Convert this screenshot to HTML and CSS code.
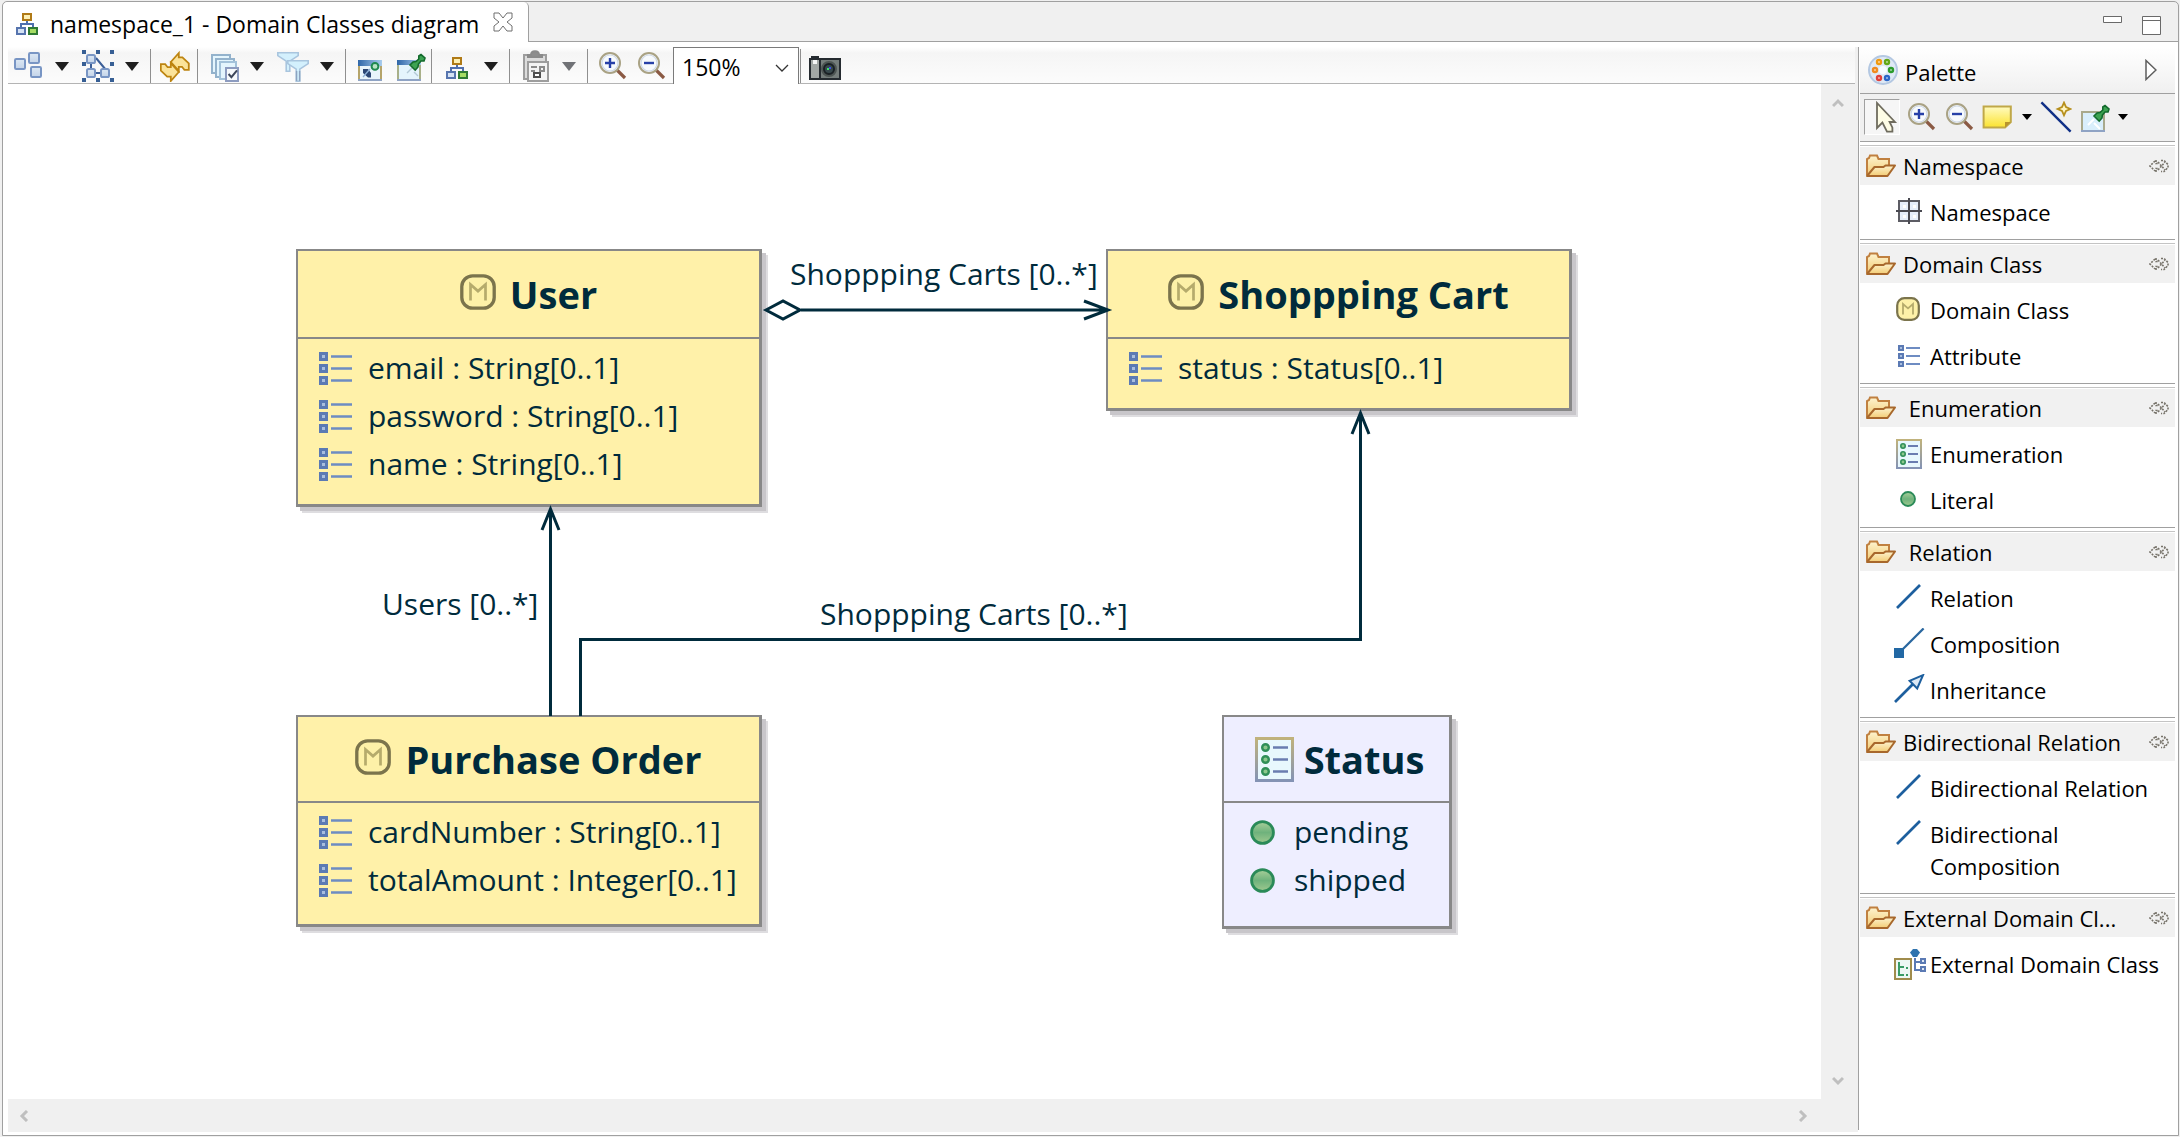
FILE: index.html
```html
<!DOCTYPE html>
<html lang="en">
<head>
<meta charset="utf-8">
<title>namespace_1 - Domain Classes diagram</title>
<link rel="stylesheet" href="styles.css">
</head>
<body>
<svg class="defs" aria-hidden="true">
  <defs>
    <linearGradient id="gBlue" x1="0" y1="0" x2="0" y2="1"><stop offset="0" stop-color="#dce8f4"/><stop offset="1" stop-color="#c3d3e8"/></linearGradient>
    <linearGradient id="gFolder" x1="0" y1="0" x2="0" y2="1"><stop offset="0" stop-color="#fdf3cf"/><stop offset="1" stop-color="#f3cc74"/></linearGradient>
    <linearGradient id="gNote" x1="0" y1="0" x2="0" y2="1"><stop offset="0" stop-color="#fffbc0"/><stop offset="1" stop-color="#fbe22e"/></linearGradient>
    <linearGradient id="gTitle" x1="0" y1="0" x2="1" y2="0"><stop offset="0" stop-color="#2f66a8"/><stop offset="1" stop-color="#a9cdee"/></linearGradient>
    <linearGradient id="gPage" x1="0" y1="0" x2="0" y2="1"><stop offset="0" stop-color="#c0b27c"/><stop offset="1" stop-color="#8493b4"/></linearGradient>
    <linearGradient id="gDot" x1="0" y1="0" x2="0" y2="1"><stop offset="0" stop-color="#a9cf9a"/><stop offset=".5" stop-color="#6fb27c"/><stop offset="1" stop-color="#9fc98f"/></linearGradient>
  </defs>
  <symbol id="tree" viewBox="0 0 11 11">
    <path d="M5.500 4v2M2.500 8V5.500h6V8" fill="none" stroke="#4f6fae"/>
    <rect x="3.500" y=".5" width="4" height="3" fill="#fdf0b4" stroke="#b07a16"/>
    <rect x=".5" y="7.500" width="4" height="3" fill="#d5e2f4" stroke="#5674ae"/>
    <rect x="6.500" y="7.500" width="4" height="3" fill="#a6dc64" stroke="#2f7a34"/>
  </symbol>
  <symbol id="arrange" viewBox="0 0 16 16">
    <g fill="url(#gBlue)" stroke="#7895c4"><rect x="1.500" y="4.500" width="5" height="5" rx=".6"/><rect x="8.500" y="1.500" width="5" height="5" rx=".6"/><rect x="9.500" y="8.500" width="5" height="5" rx=".6"/></g>
  </symbol>
  <symbol id="selectall" viewBox="0 0 16 16">
    <path d="M7 4l5 6M4.500 7v3M7 11.500h3" fill="none" stroke="#3c5f98"/>
    <g fill="url(#gBlue)" stroke="#7895c4"><rect x="2.500" y="2.500" width="4" height="4" rx=".8"/><rect x="2.500" y="9.500" width="4" height="4" rx=".8"/><rect x="9.500" y="9.500" width="4" height="4" rx=".8"/></g>
    <path d="M0 0h2v2H0zM7 0h2v2H7zM14 0h2v2h-2zM0 6h2v2H0zM14 6h2v2h-2zM0 14h2v2H0zM7 14h2v2H7zM14 14h2v2h-2z" fill="#375f94"/>
  </symbol>
  <symbol id="refresh" viewBox="0 0 16 16">
    <g fill="#fbe39a" stroke="#bd8410" stroke-width=".9"><path d="M5.400 6l4-4.500v2.200h1.800l3.200 3v3.200h-2.200l-1.200-1.500H9.400v2z"/><path d="M9.400 11l-4 4.500v-2.200H3.600l-3.200-3V7.100h2.200l1.200 1.500h1.600v-2z"/></g>
  </symbol>
  <symbol id="layers" viewBox="0 0 16 16">
    <g fill="#e4f5fd" stroke="#93b2cc"><rect x="2.500" y="2.500" width="9" height="9"/><rect x="4.500" y="4.500" width="9" height="9"/><rect x="6.500" y="6" width="8" height="8.500" stroke="#a3c2da"/></g>
    <rect x="9.500" y="9" width="6" height="6.500" fill="#f6f9fc" stroke="#8d9cc0"/><path d="M10.800 12l1.400 1.600 2.800-3.400" fill="none" stroke="#3c465a"/>
  </symbol>
  <symbol id="filter" viewBox="0 0 16 16">
    <g fill="#d3f0fd" stroke="#a9c5de" stroke-width=".8"><path d="M.4 1.400h10.200v1.400L6.400 5.600v5H4.600v-5L.4 2.800z"/><path d="M5.400 5.400h10.200v1.400l-4.200 2.800v6H9.600v-6L5.400 6.800z"/></g>
    <path d="M9.800 10.500v5M11.300 10.500v5" stroke="#8ea3c0" stroke-width=".7"/>
  </symbol>
  <symbol id="showview" viewBox="0 0 16 16">
    <rect x="2" y="6" width="11" height="9" fill="#e9f4fb" stroke="#b5a46a"/><path d="M1.500 15h12" stroke="#8fa3c4"/>
    <rect x="1.500" y="5" width="12" height="3" fill="url(#gTitle)"/>
    <path d="M4 9.500h2.500l1.500 2v2.300H6.500L4 11.500z" fill="#2c4674"/><path d="M4 13.500l3.500-4" stroke="#8fb2d8" stroke-width=".7"/><circle cx="10" cy="8.200" r="1.700" fill="#b9e3c4" stroke="#1f8a50"/>
  </symbol>
  <symbol id="pinview" viewBox="0 0 16 16">
    <rect x="2" y="6" width="11" height="9" fill="#e4f4fc" stroke="#a9b089"/><path d="M1.500 15h12" stroke="#8fa3c4"/>
    <rect x="1.500" y="5" width="12" height="2.500" fill="url(#gTitle)"/>
    <path d="M6.500 11.500L9 9M10 11l2 2" stroke="#b3c9d6" stroke-width=".7"/><path d="M8 7.500l2.600 2.600 1.400-1.600.2-1.500 1.300-1.500h1.500L15.500 4 13.500 2.300 12.400 3v1.500L11 5.800 9.500 6z" fill="#3da352" stroke="#136a2c" stroke-width=".8"/>
  </symbol>
  <symbol id="pinnote" viewBox="0 0 16 16">
    <rect x="2" y="5.500" width="11" height="9.500" fill="#d9eefb" stroke="#a9a98c"/><path d="M1.500 15h12" stroke="#8fa3c4"/>
    <path d="M8 11l3 3M5 12l3-3" stroke="#fff"/><path d="M8 7.500l2.600 2.600 1.400-1.600.2-1.500 1.300-1.500h1.500L15.500 4 13.500 2.300 12.400 3v1.500L11 5.800 9.500 6z" fill="#3da352" stroke="#136a2c" stroke-width=".8"/>
  </symbol>
  <symbol id="clipboard" viewBox="0 0 16 16">
    <rect x="2.500" y="2.500" width="11" height="12" fill="#dcdcdc" stroke="#9d9d9d"/><path d="M4.500 3.500v-1H6c0-2.500 4-2.500 4 0h1.500v1z" fill="#8d8d8d" stroke="#8a8a8a"/>
    <path d="M4.500 6h10v9.500h-10z" fill="#f4f4f4" stroke="#9d9d9d"/><path d="M6 8.500h3M6 10.500h2M10.500 8.500h2v2h-2z" fill="none" stroke="#8a8a8a"/><rect x="7.500" y="11.500" width="3" height="2" fill="#fff" stroke="#4e4e4e"/>
  </symbol>
  <symbol id="lens" viewBox="0 0 16 16">
    <path d="M10 10l4 4" stroke="#8b5a44" stroke-width="1.600"/><circle cx="6.500" cy="6.500" r="5" fill="#f7fafd" stroke="#a9a284"/><circle cx="6.500" cy="6.500" r="4" fill="none" stroke="#cfd9e6" stroke-width=".6"/>
  </symbol>
  <symbol id="zoomin" viewBox="0 0 16 16"><use href="#lens"/><path d="M4 6.500h5M6.500 4v5" stroke="#2740a8" stroke-width="1.200"/></symbol>
  <symbol id="zoomout" viewBox="0 0 16 16"><use href="#lens"/><path d="M4 6.500h5" stroke="#2740a8" stroke-width="1.200"/></symbol>
  <symbol id="camera" viewBox="0 0 16 16">
    <path d="M1 3h4v1h11v11H0V4h1z" fill="#252b30"/><rect x="1" y="5" width="4" height="9" fill="#a2a8a6"/><rect x="2" y="5" width="2" height="2" fill="#f4f6f6"/><rect x="6" y="5" width="9" height="9" fill="#757d7b"/>
    <circle cx="10" cy="9.500" r="3.500" fill="#1a2024" stroke="#4d5553"/><circle cx="10" cy="9.500" r="2" fill="#37484c"/><path d="M9 9h1v1H9z" fill="#3ee06a"/><path d="M10 8.500h1v1h-1z" fill="#3b50e6"/>
  </symbol>
  <symbol id="palette" viewBox="0 0 16 16">
    <circle cx="8" cy="8" r="7" fill="#dfe9f5" stroke="#b4c8e2"/><circle cx="8" cy="8" r="2" fill="#f5fbff"/>
    <g fill="#fff" stroke-width="1.200"><circle cx="6" cy="4" r="1" stroke="#f09a10"/><circle cx="10" cy="4" r="1" stroke="#62a818"/><circle cx="4" cy="8" r="1" stroke="#f08a20"/><circle cx="12" cy="8" r="1" stroke="#2c9c2c"/><circle cx="6" cy="12" r="1" stroke="#e0403a"/><circle cx="10" cy="12" r="1" stroke="#2a66c8"/></g>
  </symbol>
  <symbol id="cursor" viewBox="0 0 16 16"><path d="M5.500 1v12.500l2.700-2.700 2.300 4.500h2.700v-2L11.800 10.500h2.700z" fill="#fefde6" stroke="#6f6c5e" stroke-width=".9"/></symbol>
  <symbol id="note" viewBox="0 0 16 16"><path d="M.8 2.800h13.600v7.700l-2.900 2.800H.8z" fill="url(#gNote)" stroke="#c0a848"/><path d="M11.500 13.300v-2.800h2.900z" fill="#b8942c"/></symbol>
  <symbol id="newline" viewBox="0 0 16 16"><path d="M.7.7l14.600 14.600" stroke="#0f2f86" stroke-width="1.200"/><path d="M12 .8l1 2.200 2.200 1-2.200 1-1 2.200-1-2.200-2.200-1 2.200-1z" fill="#fff6c2" stroke="#b68f1c" stroke-width=".9"/></symbol>
  <symbol id="folder" viewBox="0 0 32 24">
    <path d="M2 21V5l2-1 1-2.500h7L13.500 5H24v6" fill="url(#gFolder)" stroke="#c08040" stroke-width="2"/><path d="M2 22l7.500-9h9l2-1.500H30L22.500 22z" fill="url(#gFolder)" stroke="#a8682c" stroke-width="2" stroke-linejoin="round"/>
  </symbol>
  <symbol id="pushpin" viewBox="0 0 20 14"><path d="M6 2L1 7l5 5M7 1v3.500h3M7 13V9.500h3M9 3l7 8M9 11l7-8M12 1.500h3L19 5.500v3l-4 4h-3" fill="none" stroke="#77736a" stroke-width="1.600" stroke-dasharray="2 1.200"/></symbol>
  <symbol id="grid" viewBox="0 0 16 16"><rect x="2.500" y="2.500" width="10" height="10" fill="#e6eefb" stroke="#5c5c64" stroke-width="1"/><path d="M7.500 1v13M1 7.500h13" stroke="#4a4a52"/><path d="M4.500 4.500h1.500v1.500H4.500zM9.500 4.500H11v1.500H9.500zM4.500 9.500h1.500V11H4.500zM9.500 9.500H11V11H9.500z" fill="#fff"/></symbol>
  <symbol id="mclass" viewBox="0 0 12 12"><rect x=".6" y=".6" width="10.800" height="10.800" rx="3.600" fill="#fdf1a8" stroke="#7b744c" stroke-width="1.100"/><path d="M3.500 8.800V3.500L6 5.700l2.500-2.200v5.300" fill="none" stroke="#b5ab6c" stroke-width=".9"/></symbol>
  <symbol id="attr" viewBox="0 0 11 11"><path d="M0 0h3v3H0zM0 4h3v3H0zM0 8h3v3H0z" fill="#5b7ab4"/><path d="M1 1h1v1H1zM1 5h1v1H1zM1 9h1v1H1z" fill="#a9bede"/><path d="M4 1.500h7M4 5.500h7M4 9.500h7" stroke="#6e8cc2" stroke-width=".9"/></symbol>
  <symbol id="enum" viewBox="0 0 13 15"><rect x=".5" y=".5" width="12" height="14" fill="#e8f8fd" stroke="url(#gPage)"/><g fill="#8cc88c" stroke="#2f8f58" stroke-width=".8"><circle cx="3.500" cy="3.500" r="1.100"/><circle cx="3.500" cy="7.500" r="1.100"/><circle cx="3.500" cy="11.500" r="1.100"/></g><path d="M6 3.500h5M6 7.500h5M6 11.500h5" stroke="#6a7db0" stroke-width=".9"/></symbol>
  <symbol id="literal" viewBox="0 0 8 8"><circle cx="4" cy="4" r="3.500" fill="url(#gDot)" stroke="#2a8a58" stroke-width=".9"/></symbol>
  <symbol id="rel" viewBox="0 0 16 16"><path d="M1.500 13L13 1.500" stroke="#1d5f9e" stroke-width="1.300"/></symbol>
  <symbol id="comp" viewBox="0 0 16 16"><path d="M4 11L14.800.2" stroke="#2a679f" stroke-width="1.100"/><path d="M0 10h5v5H0z" fill="#2268a4"/></symbol>
  <symbol id="inherit" viewBox="0 0 16 16"><path d="M.5 14L10 4.500" stroke="#1d5f9e" stroke-width="1.300"/><path d="M14.500.6L7.800 3.400l3.800 3.800z" fill="#dce9f5" stroke="#1d5f9e"/></symbol>
  <symbol id="extern" viewBox="0 0 16 16"><rect x=".5" y="5.500" width="8" height="10" fill="#eef8f4" stroke="#a08c4c"/><path d="M2.500 7v7M2.500 9.500H5M2.500 13.500H5M6 10h1M6 13.500h1" stroke="#3a9c66"/><path d="M10.500 5v6H13M10.500 7H13" fill="none" stroke="#5b7ab4"/><path d="M8 2.200L9.500.5h2L13 2.200 11.500 4.500h-2z" fill="#2f73ae"/><path d="M13.500 5.500h2v2h-2zM13.500 9.500h2v2h-2z" fill="#dde7f5" stroke="#5b7ab4"/></symbol>
</svg>

<div class="window">
  <header class="tabbar">
    <div class="tab">
      <svg class="tab-icon"><use href="#tree"/></svg>
      <span>namespace_1 - Domain Classes diagram</span>
      <button class="tab-close" aria-label="Close"><svg viewBox="0 0 20 20"><path d="M1 1h5l4 5 4-5h5v5l-5 4 5 4v5h-5l-4-5-4 5H1v-5l5-4-5-4z" fill="#fff" stroke="#6e6e6e"/></svg></button>
    </div>
    <div class="win-buttons">
      <button aria-label="Minimize"><svg viewBox="0 0 20 20"><path d="M.5.5h18v6H.5z" fill="#fff" stroke="#6a6a6a"/></svg></button>
      <button aria-label="Maximize"><svg viewBox="0 0 20 20"><path d="M.5.5h18v18H.5zM.5 4.500h18" fill="#fff" stroke="#6a6a6a"/></svg></button>
    </div>
  </header>

  <div class="body">
    <main class="editor">
      <div class="toolbar">
        <div class="group">
          <button class="tool" aria-label="Arrange"><svg><use href="#arrange"/></svg></button><button class="drop" aria-label="Arrange menu"><i></i></button>
          <button class="tool second" aria-label="Select"><svg><use href="#selectall"/></svg></button><button class="drop" aria-label="Select menu"><i></i></button>
        </div>
        <div class="group plain"><button class="tool" aria-label="Refresh"><svg><use href="#refresh"/></svg></button></div>
        <div class="group">
          <button class="tool" aria-label="Layers"><svg><use href="#layers"/></svg></button><button class="drop" aria-label="Layers menu"><i></i></button>
          <button class="tool second" aria-label="Filters"><svg><use href="#filter"/></svg></button><button class="drop" aria-label="Filters menu"><i></i></button>
        </div>
        <div class="group plain"><button class="tool" aria-label="Show"><svg><use href="#showview"/></svg></button><button class="tool" aria-label="Pin"><svg><use href="#pinview"/></svg></button></div>
        <div class="group"><button class="tool" aria-label="Layout"><svg class="small"><use href="#tree"/></svg></button><button class="drop" aria-label="Layout menu"><i></i></button></div>
        <div class="group"><button class="tool" aria-label="Paste"><svg><use href="#clipboard"/></svg></button><button class="drop off" aria-label="Paste menu"><i></i></button></div>
        <div class="group plain zooms"><button class="tool" aria-label="Zoom in"><svg><use href="#zoomin"/></svg></button><button class="tool" aria-label="Zoom out"><svg><use href="#zoomout"/></svg></button></div>
        <div class="zoom">
          <select aria-label="Zoom level"><option>150%</option></select>
          <svg viewBox="0 0 14 8"><path d="M1 1l6 6 6-6" fill="none" stroke="#333" stroke-width="1.300"/></svg>
        </div>
        <div class="group last"><button class="tool" aria-label="Export as image"><svg><use href="#camera"/></svg></button></div>
      </div>

      <div class="workspace">
        <section class="canvas">
          <article class="node user">
            <h2><svg><use href="#mclass"/></svg>User</h2>
            <ul>
              <li><svg><use href="#attr"/></svg>email : String[0..1]</li>
              <li><svg><use href="#attr"/></svg>password : String[0..1]</li>
              <li><svg><use href="#attr"/></svg>name : String[0..1]</li>
            </ul>
          </article>
          <article class="node cart">
            <h2><svg><use href="#mclass"/></svg>Shoppping Cart</h2>
            <ul><li><svg><use href="#attr"/></svg>status : Status[0..1]</li></ul>
          </article>
          <article class="node order">
            <h2><svg><use href="#mclass"/></svg>Purchase Order</h2>
            <ul>
              <li><svg><use href="#attr"/></svg>cardNumber : String[0..1]</li>
              <li><svg><use href="#attr"/></svg>totalAmount : Integer[0..1]</li>
            </ul>
          </article>
          <article class="node enum">
            <h2><svg><use href="#enum"/></svg>Status</h2>
            <ul>
              <li><svg><use href="#literal"/></svg>pending</li>
              <li><svg><use href="#literal"/></svg>shipped</li>
            </ul>
          </article>
          <svg class="edges" aria-hidden="true">
            <g fill="none" stroke="#002b3c" stroke-width="3">
              <path d="M793 226h305M1076 217l24 9-24 9"/>
              <path d="M758 226l17-9 17 9-17 9z" fill="#fff"/>
              <path d="M542.500 632V425M534 446l8.500-21 8.500 21"/>
              <path d="M572.500 632V555.500h780V329M1344 350l8.500-21 8.500 21"/>
            </g>
          </svg>
          <span class="label label-a">Shoppping Carts [0..*]</span>
          <span class="label label-b">Users [0..*]</span>
          <span class="label label-c">Shoppping Carts [0..*]</span>
        </section>
        <div class="vscroll">
          <button aria-label="Scroll up"><svg viewBox="0 0 12 12"><path d="M1 8l5-5 5 5"/></svg></button>
          <button aria-label="Scroll down"><svg viewBox="0 0 12 12"><path d="M1 3l5 5 5-5"/></svg></button>
        </div>
        <div class="hscroll">
          <button aria-label="Scroll left"><svg viewBox="0 0 12 12"><path d="M9 1L4 6l5 5"/></svg></button>
          <button aria-label="Scroll right"><svg viewBox="0 0 12 12"><path d="M3 1l5 5-5 5"/></svg></button>
        </div>
      </div>
    </main>

    <aside class="palette">
      <div class="palette-title">
        <svg class="i32"><use href="#palette"/></svg><span>Palette</span>
        <button aria-label="Collapse palette"><svg viewBox="0 0 12 22"><path d="M1 1.500v19L11 11z" fill="#fff" stroke="#5e5e5e" stroke-width="1.500"/></svg></button>
      </div>
      <div class="palette-tools">
        <button class="ptool active" aria-label="Select"><svg><use href="#cursor"/></svg></button>
        <button class="ptool" aria-label="Zoom in"><svg><use href="#zoomin"/></svg></button>
        <button class="ptool" aria-label="Zoom out"><svg><use href="#zoomout"/></svg></button>
        <button class="ptool" aria-label="Note"><svg><use href="#note"/></svg></button>
        <button class="pdrop" aria-label="Note menu"><i></i></button>
        <button class="ptool" aria-label="Link"><svg><use href="#newline"/></svg></button>
        <button class="ptool" aria-label="Pin"><svg><use href="#pinnote"/></svg></button>
        <button class="pdrop" aria-label="Pin menu"><i></i></button>
      </div>
      <section class="drawer">
        <button class="head"><svg class="folder"><use href="#folder"/></svg><span>Namespace</span><svg class="pin"><use href="#pushpin"/></svg></button>
        <button class="entry"><svg class="i32"><use href="#grid"/></svg><span>Namespace</span></button>
      </section>
      <section class="drawer">
        <button class="head"><svg class="folder"><use href="#folder"/></svg><span>Domain Class</span><svg class="pin"><use href="#pushpin"/></svg></button>
        <button class="entry"><svg class="i24"><use href="#mclass"/></svg><span>Domain Class</span></button>
        <button class="entry"><svg class="i22"><use href="#attr"/></svg><span>Attribute</span></button>
      </section>
      <section class="drawer">
        <button class="head"><svg class="folder"><use href="#folder"/></svg><span>&nbsp;Enumeration</span><svg class="pin"><use href="#pushpin"/></svg></button>
        <button class="entry"><svg class="i30"><use href="#enum"/></svg><span>Enumeration</span></button>
        <button class="entry"><svg class="i16"><use href="#literal"/></svg><span>Literal</span></button>
      </section>
      <section class="drawer">
        <button class="head"><svg class="folder"><use href="#folder"/></svg><span>&nbsp;Relation</span><svg class="pin"><use href="#pushpin"/></svg></button>
        <button class="entry"><svg class="i32"><use href="#rel"/></svg><span>Relation</span></button>
        <button class="entry"><svg class="i32"><use href="#comp"/></svg><span>Composition</span></button>
        <button class="entry"><svg class="i32"><use href="#inherit"/></svg><span>Inheritance</span></button>
      </section>
      <section class="drawer">
        <button class="head"><svg class="folder"><use href="#folder"/></svg><span>Bidirectional Relation</span><svg class="pin"><use href="#pushpin"/></svg></button>
        <button class="entry"><svg class="i32"><use href="#rel"/></svg><span>Bidirectional Relation</span></button>
        <button class="entry"><svg class="i32"><use href="#rel"/></svg><span>Bidirectional Composition</span></button>
      </section>
      <section class="drawer">
        <button class="head"><svg class="folder"><use href="#folder"/></svg><span>External Domain Cl...</span><svg class="pin"><use href="#pushpin"/></svg></button>
        <button class="entry"><svg class="i32"><use href="#extern"/></svg><span>External Domain Class</span></button>
      </section>
    </aside>
  </div>
</div>
</body>
</html>
```
FILE: styles.css
```css
* { box-sizing: border-box; }

body {
  margin: 0;
  height: 100vh;
  padding: 1px 1px 1px 2px;
  background: #f0f0f0;
  color: #000;
  font-family: "Open Sans", "Noto Sans", sans-serif;
  font-size: 22px;
  line-height: 32px;
}

button {
  margin: 0;
  padding: 0;
  border: 0;
  background: none;
  color: inherit;
  font: inherit;
  text-align: left;
}

svg { display: block; flex: none; }
.defs { position: absolute; width: 0; height: 0; }

.i32 { width: 32px; height: 32px; }
.i30 { width: 26px; height: 30px; }
.i24 { width: 24px; height: 24px; }
.i22 { width: 22px; height: 22px; }
.i16 { width: 16px; height: 16px; }

.window {
  display: flex;
  flex-direction: column;
  height: 100%;
  border: 1px solid #a0a0a0;
  border-radius: 5px 5px 0 0;
}

/* Tab bar */
.tabbar {
  display: flex;
  justify-content: space-between;
  height: 40px;
  border-bottom: 1px solid #a0a0a0;
}

.tab {
  display: flex;
  align-items: center;
  height: 40px;
  padding: 4px 15px 0 13px;
  border-right: 1px solid #a0a0a0;
  border-radius: 5px 5px 0 0;
  background: #fff;
  font-size: 23px;
}

.tab-icon { width: 22px; height: 22px; margin-right: 12px; }
.tab-close { margin-left: 14px; padding-bottom: 4px; }
.tab-close svg { width: 20px; height: 20px; }
.win-buttons { display: flex; gap: 19px; padding: 8px 16px 0 0; }
.win-buttons svg { width: 20px; height: 20px; }

.body {
  display: flex;
  flex: 1;
  min-height: 0;
  padding: 5px 3px 3px 5px;
  background: #fff;
}

/* Editor */
.editor {
  display: flex;
  flex: 1;
  flex-direction: column;
  min-width: 0;
  border-right: 3px solid #f0f0f0;
}

.toolbar {
  display: flex;
  height: 37px;
  border-bottom: 1px solid #b4b4b4;
  background: linear-gradient(#fff, #f5f5f5 6px, #fcfcfc);
}

.group {
  display: flex;
  align-items: center;
  margin-top: 2px;
  padding-left: 9px;
  border-right: 1px solid #8f8f8f;
}

.group:first-child { padding-left: 4px; }
.group.plain { gap: 7px; padding-right: 5px; }
.group.zooms { border-right: 0; }
.group.last { border-right: 0; border-left: 1px solid #8f8f8f; margin-left: 1px; padding-left: 8px; }
.tool svg { width: 32px; height: 32px; }
.tool svg.small { width: 22px; height: 22px; margin: 3px 5px 0 5px; }
.tool.second { margin-left: 2px; }
.drop { display: flex; justify-content: center; width: 36px; }
.drop i { border: 7px solid transparent; border-top: 9px solid #1e1e1e; border-bottom: 0; }
.drop.off i { border-top-color: #707276; }

.zoom {
  display: grid;
  align-items: center;
  width: 126px;
  height: 37px;
  border: 1px solid #7a7a7a;
  border-bottom: 0;
  background: #fff;
}

.zoom select,
.zoom svg { grid-area: 1 / 1; }

.zoom select {
  width: 100%;
  height: 36px;
  padding: 2px 0 0 8px;
  border: 0;
  background: none;
  color: #000;
  font: inherit;
  font-size: 23px;
  appearance: none;
}

.zoom svg {
  width: 14px;
  height: 8px;
  margin: 3px 9px 0 0;
  justify-self: end;
  pointer-events: none;
}

.workspace {
  display: grid;
  flex: 1;
  grid-template-columns: 1fr 34px;
  grid-template-rows: 1fr 33px;
  min-height: 0;
}

.vscroll,
.hscroll {
  display: flex;
  align-items: center;
  justify-content: space-between;
  background: #f0f0f0;
}

.vscroll { flex-direction: column; padding: 14px 0 12px; }
.hscroll { grid-column: 1 / 3; padding: 0 46px 0 10px; }
.vscroll svg,
.hscroll svg { width: 12px; height: 12px; fill: none; stroke: #bfbfbf; stroke-width: 3; }

/* Diagram */
.canvas {
  position: relative;
  overflow: hidden;
  background: #fff;
  color: #002b3c;
  font-size: 30px;
  line-height: 48px;
}

.edges { position: absolute; left: 0; top: 0; width: 100%; height: 100%; }
.label { position: absolute; white-space: nowrap; }
.label-a { left: 782px; top: 166px; }
.label-b { left: 374px; top: 496px; }
.label-c { left: 812px; top: 506px; }

.node {
  position: absolute;
  border: 2px solid #888;
  border-width: 2px 3px 3px 2px;
  background: #fff1a9;
  box-shadow: 4px 4px 0 #c8c6ca, 6px 6px 0 #dedde0;
}

.user { left: 288px; top: 165px; width: 466px; height: 258px; }
.cart { left: 1098px; top: 165px; width: 466px; height: 162px; }
.order { left: 288px; top: 631px; width: 466px; height: 212px; }
.enum { left: 1214px; top: 631px; width: 230px; height: 214px; background: #eeeeff; }

.node h2 {
  display: flex;
  align-items: center;
  justify-content: center;
  gap: 14px;
  height: 88px;
  margin: 0;
  border-bottom: 2px solid #888;
  font-size: 38px;
  font-weight: 700;
}

.node h2 svg { width: 36px; height: 36px; margin-bottom: 4px; }
.order h2,
.enum h2 { height: 86px; }
.enum h2 { gap: 10px; padding-left: 6px; }
.enum h2 svg { width: 39px; height: 45px; margin-bottom: 0; }

.node ul { margin: 0; padding: 5px 0 0 21px; list-style: none; }
.node li { display: flex; align-items: center; gap: 16px; white-space: nowrap; }
.node li svg { width: 33px; height: 33px; }
.enum ul { padding-left: 26px; }
.enum li { gap: 19px; }
.enum li svg { width: 25px; height: 25px; }

/* Palette */
.palette {
  width: 317px;
  margin-bottom: 2px;
  border-left: 1px solid #a0a0a0;
  padding-left: 1px;
}

.palette-title {
  display: flex;
  align-items: center;
  gap: 6px;
  height: 47px;
  padding: 0 18px 0 7px;
  border-bottom: 1px solid #a0a0a0;
  background: linear-gradient(#fff, #f0f0f0);
}

.palette-title span { flex: 1; padding-top: 3px; }
.palette-title button svg { width: 12px; height: 22px; }

.palette-tools {
  display: flex;
  align-items: center;
  gap: 6px;
  height: 48px;
  padding: 0 4px 2px;
  border-bottom: 1px solid #a0a0a0;
  background: #f0f0f0;
}

.ptool svg { width: 32px; height: 32px; }
.ptool.active { padding: 1px; border: 1px solid; border-color: #a0a0a0 #fff #fff #a0a0a0; background: #f6f6f6; }
.pdrop { display: flex; justify-content: center; width: 14px; }
.pdrop i { border: 5px solid transparent; border-top: 6px solid #000; border-bottom: 0; }

.drawer {
  padding-bottom: 3px;
  border-top: 1px solid #c4c4c4;
  border-bottom: 1px solid #a0a0a0;
  margin-top: 3px;
}

.drawer:last-child { border-bottom: 0; }

.head,
.entry { display: flex; width: 100%; }

.head {
  align-items: center;
  height: 38px;
  margin: 1px 0 5px;
  padding: 0 6px 0 5px;
  background: #f1f1f1;
}

.head span { flex: 1; padding-left: 6px; white-space: nowrap; }
.folder { width: 32px; height: 24px; }
.pin { width: 20px; height: 14px; }

.entry { padding: 6px 0 8px 70px; }
.entry span { flex: 1; }
.entry svg { align-self: flex-start; }
.entry .i32 { margin: 0 4px 0 -36px; }
.entry .i30 { margin: 1px 8px 0 -34px; }
.entry .i24 { margin: 3px 10px 0 -34px; }
.entry .i22 { margin: 5px 10px 0 -32px; }
.entry .i16 { margin: 7px 14px 0 -30px; }
```
